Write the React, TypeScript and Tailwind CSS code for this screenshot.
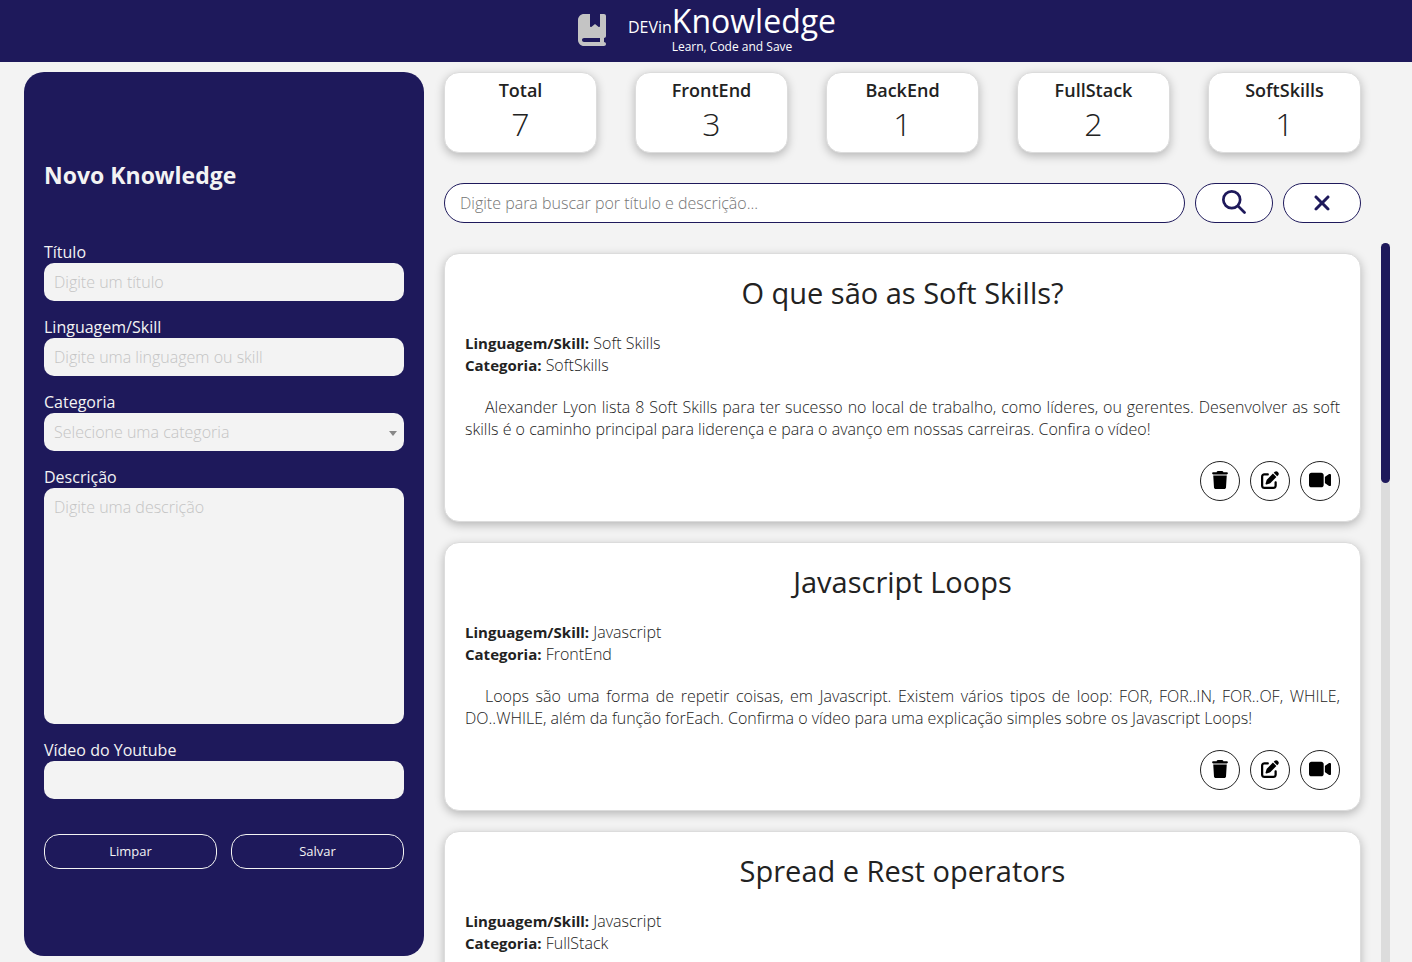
import type { ReactNode } from "react";
import {
  FaBookBookmark,
  FaXmark,
  FaTrash,
  FaPenToSquare,
  FaVideo,
} from "react-icons/fa6";

const stats = [
  { label: "Total", value: 7 },
  { label: "FrontEnd", value: 3 },
  { label: "BackEnd", value: 1 },
  { label: "FullStack", value: 2 },
  { label: "SoftSkills", value: 1 },
];

const items = [
  {
    title: "O que são as Soft Skills?",
    skill: "Soft Skills",
    category: "SoftSkills",
    text: "Alexander Lyon lista 8 Soft Skills para ter sucesso no local de trabalho, como líderes, ou gerentes. Desenvolver as soft skills é o caminho principal para liderença e para o avanço em nossas carreiras. Confira o vídeo!",
  },
  {
    title: "Javascript Loops",
    skill: "Javascript",
    category: "FrontEnd",
    text: "Loops são uma forma de repetir coisas, em Javascript. Existem vários tipos de loop: FOR, FOR..IN, FOR..OF, WHILE, DO..WHILE, além da função forEach. Confirma o vídeo para uma explicação simples sobre os Javascript Loops!",
  },
  {
    title: "Spread e Rest operators",
    skill: "Javascript",
    category: "FullStack",
    text: "",
  },
];

const control =
  "w-full rounded-[10px] bg-[#f3f3f3] px-[10px] font-light text-[#222] placeholder:text-[#c4c4c4] outline-none";

function Field({ id, label, children }: { id: string; label: string; children: ReactNode }) {
  return (
    <div className="flex flex-col">
      <label htmlFor={id} className="leading-[22px]">
        {label}
      </label>
      {children}
    </div>
  );
}

function SearchIcon() {
  return (
    <svg
      viewBox="0 0 24 24"
      className="size-6 fill-none stroke-current stroke-[2.7]"
      strokeLinecap="round"
      aria-hidden="true"
    >
      <circle cx="9.75" cy="9.75" r="8.4" />
      <path d="M16 16l6.5 6.5" />
    </svg>
  );
}

function RoundButton({ label, children }: { label: string; children: ReactNode }) {
  return (
    <button
      type="button"
      aria-label={label}
      className="flex size-10 items-center justify-center rounded-full border border-[#222] bg-white pb-[2px] text-black"
    >
      {children}
    </button>
  );
}

function Card({ item }: { item: (typeof items)[number] }) {
  return (
    <article className="flex flex-col gap-5 rounded-[15px] border border-[#dcdcdc] bg-white p-5 pt-[19px] shadow-[0_3px_10px_rgba(0,0,0,0.25)]">
      <h3 className="text-center text-[29px] leading-[39px]">{item.title}</h3>
      <div className="font-light leading-[22px]">
        <p>
          <b className="text-[15px] font-bold">Linguagem/Skill:</b> {item.skill}
        </p>
        <p>
          <b className="text-[15px] font-bold">Categoria:</b> {item.category}
        </p>
      </div>
      <p className="min-h-11 indent-5 text-justify font-light leading-[22px]">{item.text}</p>
      <div className="flex justify-end gap-[10px] pt-px">
        <RoundButton label="Excluir">
          <FaTrash size={18} />
        </RoundButton>
        <RoundButton label="Editar">
          <FaPenToSquare size={18} />
        </RoundButton>
        <RoundButton label="Assistir ao vídeo">
          <FaVideo size={22} />
        </RoundButton>
      </div>
    </article>
  );
}

export default function App() {
  return (
    <div className="flex h-screen flex-col overflow-hidden bg-[#f3f3f3] font-['Open_Sans',sans-serif] text-base text-[#222]">
      <header className="flex h-[62px] shrink-0 items-center justify-center gap-5 bg-[#1e195b] pb-[2px] text-white">
        <FaBookBookmark size={32} className="text-[#c4c4c4]" />
        <div className="flex flex-col items-center pb-[2px]">
          <h1 className="text-[32px] leading-9">
            <span className="text-base leading-none">DEVin</span>Knowledge
          </h1>
          <p className="text-xs leading-4">Learn, Code and Save</p>
        </div>
      </header>

      <main className="flex min-h-0 flex-1 gap-5 pl-6 pr-[22px] pt-[10px]">
        <aside className="mb-[6px] flex w-[400px] shrink-0 flex-col justify-center rounded-[20px] bg-[#1e195b] px-5 text-[#f3f3f3]">
          <h2 className="mb-[50px] text-[23px] font-bold leading-8">Novo Knowledge</h2>
          <form className="flex flex-col gap-[15px]">
            <Field id="titulo" label="Título">
              <input id="titulo" placeholder="Digite um título" className={`${control} h-[38px]`} />
            </Field>
            <Field id="linguagem" label="Linguagem/Skill">
              <input
                id="linguagem"
                placeholder="Digite uma linguagem ou skill"
                className={`${control} h-[38px]`}
              />
            </Field>
            <Field id="categoria" label="Categoria">
              <div className="relative">
                <select
                  id="categoria"
                  defaultValue=""
                  className="h-[38px] w-full appearance-none rounded-[10px] bg-[#f3f3f3] px-[10px] font-light text-[#c4c4c4] outline-none"
                >
                  <option value="">Selecione uma categoria</option>
                  <option>FrontEnd</option>
                  <option>BackEnd</option>
                  <option>FullStack</option>
                  <option>SoftSkills</option>
                </select>
                <svg
                  viewBox="0 0 8 5"
                  className="pointer-events-none absolute right-[7px] top-[18px] h-[5px] w-2 fill-[#888]"
                  aria-hidden="true"
                >
                  <path d="M0 0h8L4 5z" />
                </svg>
              </div>
            </Field>
            <Field id="descricao" label="Descrição">
              <textarea
                id="descricao"
                placeholder="Digite uma descrição"
                className={`${control} h-[236px] resize-none py-[8px] leading-[22px]`}
              />
            </Field>
            <Field id="video" label="Vídeo do Youtube">
              <input id="video" className={`${control} h-[38px]`} />
            </Field>
            <div className="mt-5 grid grid-cols-2 gap-[14px] text-[13px]">
              <button type="reset" className="h-[35px] rounded-[15px] border border-[#f3f3f3]">
                Limpar
              </button>
              <button type="button" className="h-[35px] rounded-[15px] border border-[#f3f3f3]">
                Salvar
              </button>
            </div>
          </form>
        </aside>

        <section className="flex min-w-0 flex-1 flex-col">
          <div className="mr-[29px] flex justify-between">
            {stats.map((s) => (
              <div
                key={s.label}
                className="flex h-[81px] w-[153px] flex-col items-center rounded-[15px] border border-[#dcdcdc] bg-white pt-[3px] shadow-[0_3px_10px_rgba(0,0,0,0.25)]"
              >
                <h2 className="text-lg font-semibold leading-7">{s.label}</h2>
                <span className="text-[32px] font-light leading-10">{s.value}</span>
              </div>
            ))}
          </div>

          <form className="mr-[29px] mt-[30px] flex gap-[10px]">
            <input
              aria-label="Buscar"
              placeholder="Digite para buscar por título e descrição..."
              className="h-10 min-w-0 flex-1 rounded-[20px] border border-[#1e195b] bg-white px-[15px] font-light outline-none placeholder:text-[#757575]"
            />
            <button
              type="button"
              aria-label="Pesquisar"
              className="flex h-10 w-[78px] items-center justify-center rounded-[20px] border border-[#1e195b] bg-white pb-[2px] text-[#1e195b]"
            >
              <SearchIcon />
            </button>
            <button
              type="button"
              aria-label="Limpar busca"
              className="flex h-10 w-[78px] items-center justify-center rounded-[20px] border border-[#1e195b] bg-white text-[#1e195b]"
            >
              <FaXmark size={24} />
            </button>
          </form>

          <div className="mt-5 flex min-h-0 flex-1">
            <div className="-ml-5 flex min-w-0 flex-1 flex-col gap-5 overflow-y-auto pb-5 pl-5 pr-5 pt-[10px] [scrollbar-width:none]">
              {items.map((item) => (
                <Card key={item.title} item={item} />
              ))}
            </div>
            <div className="w-[9px] shrink-0 rounded-t-full bg-[#dcdcdc]" aria-hidden="true">
              <div className="h-60 rounded-full bg-[#1e195b]" />
            </div>
          </div>
        </section>
      </main>
    </div>
  );
}
